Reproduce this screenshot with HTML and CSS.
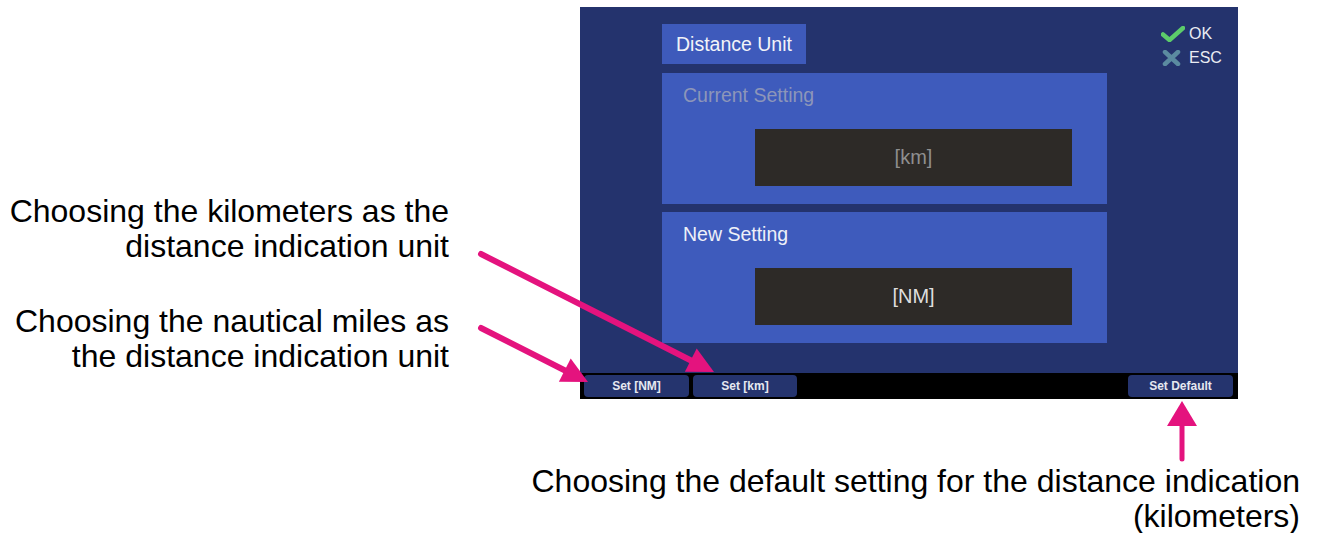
FILE: index.html
```html
<!DOCTYPE html>
<html lang="en">

<head>
  <meta charset="UTF-8" />
  <meta name="viewport" content="width=device-width, initial-scale=1.0" />
  <title>Distance Unit</title>
  <link rel="stylesheet" href="styles.css">
</head>

<body>
  <div class="page">
    <div class="top">
      <div class="notes">
        <p class="note">Choosing the kilometers as the<br>distance indication unit</p>
        <p class="note">Choosing the nautical miles as<br>the distance indication unit</p>
      </div>

      <div class="screen">
        <div class="screen-main">
          <div class="content">
            <div class="tab">Distance Unit</div>

            <div class="panel">
              <div class="panel-label dim">Current Setting</div>
              <div class="value-box dim">[km]</div>
            </div>

            <div class="panel">
              <div class="panel-label">New Setting</div>
              <div class="value-box">[NM]</div>
            </div>
          </div>

          <div class="keys">
            <div class="key">
              <svg class="key-icon" width="24" height="16" viewBox="0 0 24 16">
                <path d="M2 8.5 L8.5 14 L22 2" fill="none" stroke="#5ccc6a" stroke-width="4.5" stroke-linecap="round" stroke-linejoin="round" />
              </svg>
              <span>OK</span>
            </div>
            <div class="key">
              <svg class="key-icon" width="24" height="16" viewBox="0 0 24 16">
                <path d="M4 2 L17 14 M17 2 L4 14" fill="none" stroke="#5b8ba0" stroke-width="4.5" stroke-linecap="round" />
              </svg>
              <span>ESC</span>
            </div>
          </div>
        </div>

        <div class="softkeys">
          <div class="softkey wide">Set [NM]</div>
          <div class="softkey">Set [km]</div>
          <div class="softkey push">Set Default</div>
        </div>
      </div>
    </div>

    <p class="caption">Choosing the default setting for the distance indication<br>(kilometers)</p>

    <!-- pointer arrows drawn over the page -->
    <svg class="arrows" width="1319" height="533" viewBox="0 0 1319 533">
      <g fill="#e4137e" stroke="#e4137e">
        <line x1="481" y1="254" x2="692" y2="361" stroke-width="6" stroke-linecap="round" />
        <polygon points="714,372 684.9,371.8 696.7,348.6" stroke="none" />

        <line x1="481" y1="328" x2="566" y2="371" stroke-width="6" stroke-linecap="round" />
        <polygon points="588,382 558.9,381.8 570.7,358.6" stroke="none" />

        <line x1="1182" y1="459" x2="1182" y2="424" stroke-width="5" stroke-linecap="round" />
        <polygon points="1182,401 1167,426 1197,426" stroke="none" />
      </g>
    </svg>
  </div>
</body>

</html>
```

FILE: styles.css
```css
body {
  margin: 0;
  background-color: #ffffff;
  font-family: 'Liberation Sans', Arial, sans-serif;
  color: #000000;
}

.page {
  position: relative;
  width: 1319px;
  height: 533px;
  padding-top: 7px;
  box-sizing: border-box;
  overflow: hidden;
}

.top {
  display: flex;
}

/* annotation texts */
.notes {
  width: 449px;
  padding-top: 187px;
  text-align: right;
}

.note {
  margin: 0 0 40px 0;
  font-size: 32px;
  line-height: 35px;
}

.note:last-child {
  margin-bottom: 0;
}

.caption {
  margin: 65px 19px 0 0;
  text-align: right;
  font-size: 32px;
  line-height: 35px;
}

.arrows {
  position: absolute;
  top: 0;
  left: 0;
  pointer-events: none;
}

/* device screen */
.screen {
  margin-left: 131px;
  width: 658px;
  height: 392px;
  display: flex;
  flex-direction: column;
  font-family: 'Liberation Sans', Arial, sans-serif;
}

.screen-main {
  flex: 1;
  display: flex;
  background-color: #24336d;
}

.content {
  margin-left: 82px;
  padding-top: 17px;
  width: 445px;
  display: flex;
  flex-direction: column;
  gap: 8px;
}

.tab {
  align-self: flex-start;
  height: 40px;
  margin-bottom: 1px;
  padding: 0 14px;
  display: flex;
  align-items: center;
  background-color: #3e5abb;
  color: #f2f3f8;
  font-size: 19.5px;
}

.panel {
  padding: 11px 35px 18px 21px;
  background-color: #3e5bbc;
}

.panel-label {
  font-size: 19.5px;
  line-height: 22px;
  color: #eef0f8;
}

.panel-label.dim {
  color: #8d96b9;
}

.value-box {
  margin: 23px 0 0 72px;
  height: 57px;
  display: flex;
  align-items: center;
  justify-content: center;
  background-color: #2d2a27;
  color: #dedede;
  font-size: 20px;
}

.value-box.dim {
  color: #8f8f8f;
}

.keys {
  margin-left: 54px;
  padding-top: 15px;
}

.key {
  display: flex;
  align-items: center;
  height: 24px;
  gap: 4px;
  color: #e9ebf2;
  font-size: 16px;
}

.key-icon {
  display: block;
}

.softkeys {
  height: 26px;
  padding: 2px 5px 0 4px;
  box-sizing: border-box;
  display: flex;
  gap: 4px;
  background-color: #000000;
}

.softkey {
  width: 104px;
  height: 22px;
  border-radius: 4px;
  background-color: #25346e;
  color: #e6e8f0;
  font-size: 12px;
  font-weight: bold;
  display: flex;
  align-items: center;
  justify-content: center;
}

.softkey.wide {
  width: 105px;
}

.softkey.push {
  margin-left: auto;
  width: 105px;
}
```
